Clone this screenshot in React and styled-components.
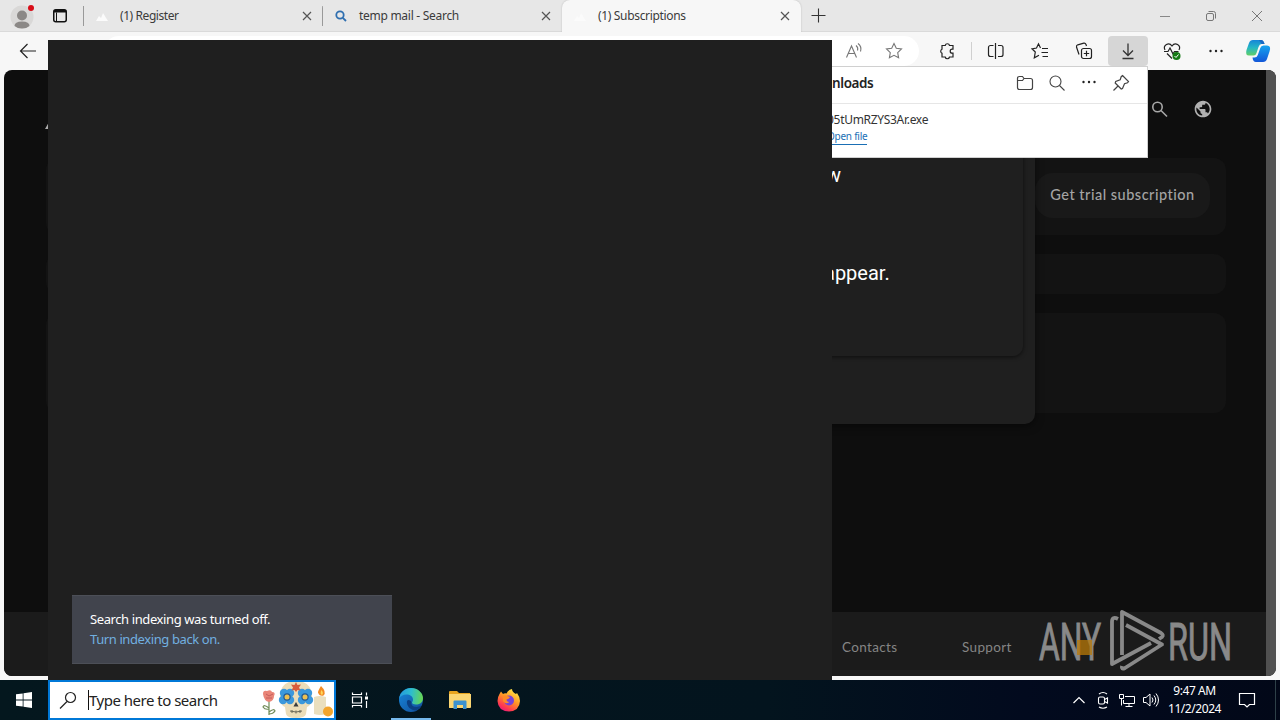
import React from 'react';
import styled, { createGlobalStyle } from 'styled-components';
import { MdPublic } from 'react-icons/md';

const App = () => {
  return (
    <Screen>
      <GlobalStyle />
      <Browser>
        <TabStrip>
          <Avatar><AvatarIcon /></Avatar>
          <TabActions><TabActionsIcon /></TabActions>
          <Tab $divided>
            <SiteIcon />
            <TabTitle $spacing="-0.42px">(1) Register</TabTitle>
            <CloseIcon />
          </Tab>
          <Tab>
            <LensIcon />
            <TabTitle $spacing="-0.28px">temp mail - Search</TabTitle>
            <CloseIcon />
          </Tab>
          <Tab $active>
            <SiteIcon />
            <TabTitle $spacing="-0.33px">(1) Subscriptions</TabTitle>
            <CloseIcon />
          </Tab>
          <NewTab><PlusIcon /></NewTab>
          <WindowControls>
            <Svg width="46" height="32" stroke="#888"><path d="M18 16.5h10" /></Svg>
            <Svg width="46" height="32" stroke="#777">
              <rect x="18.5" y="13.5" width="7" height="7" rx="1.5" />
              <path d="M20.5 11.5h5a2 2 0 0 1 2 2v5" />
            </Svg>
            <Svg width="46" height="32" stroke="#777"><path d="M18 11l10 10M28 11l-10 10" /></Svg>
          </WindowControls>
        </TabStrip>

        <Toolbar>
          <ToolButton>
            <Svg width="20" height="20" stroke="#222" strokeWidth="1.2"><path d="M18 10H2.5M9.5 3l-7 7 7 7" /></Svg>
          </ToolButton>
          <AddressBar>
            <ToolButton><ReadAloudIcon /></ToolButton>
            <ToolButton><StarIcon /></ToolButton>
          </AddressBar>
          <ToolButton><PuzzleIcon /></ToolButton>
          <Divider />
          <ToolButton><SplitIcon /></ToolButton>
          <ToolButton><FavouritesIcon /></ToolButton>
          <ToolButton><CollectionsIcon /></ToolButton>
          <ToolButton $pressed><DownloadIcon /></ToolButton>
          <ToolButton><HeartIcon /></ToolButton>
          <ToolButton><DotsIcon /></ToolButton>
          <Copilot><CopilotIcon /></Copilot>
        </Toolbar>

        <Page>
          <PageBody>
            <PageHeader>
              <PageLogo width="30" height="14"><path d="M0 13L4 6l4 4 7-8 14 11z" fill="#aaa" /></PageLogo>
              <Svg width="20" height="20" stroke="#a8a8a8" strokeWidth="1.6">
                <circle cx="8.5" cy="8" r="4.7" /><path d="M12 11.5l6 6" />
              </Svg>
              <MdPublic size={20} color="#b0b0b0" />
            </PageHeader>
            <Card $height="77px" $gap="19px"><TrialButton>Get trial subscription</TrialButton></Card>
            <Card $height="40px" $gap="19px" />
            <Card $height="100px" />
            <PageFooter>
              <FooterLink $width="120px">Contacts</FooterLink>
              <FooterLink>Support</FooterLink>
            </PageFooter>
          </PageBody>
          <ScrollTrack />
          <Dialog>
            <DialogPanel>
              <DialogTitle>w</DialogTitle>
              <DialogText>appear.</DialogText>
            </DialogPanel>
          </Dialog>
        </Page>
      </Browser>

      <Downloads>
        <DownloadsHeader>
          <DownloadsTitle>nloads</DownloadsTitle>
          <PopupIcon><FolderIcon /></PopupIcon>
          <PopupIcon>
            <Svg width="18" height="18" stroke="#444" strokeWidth="1.1"><circle cx="7.5" cy="7.5" r="5.5" /><path d="M11.5 11.5l5 5" /></Svg>
          </PopupIcon>
          <PopupIcon $lift="2px"><DotsIcon /></PopupIcon>
          <PopupIcon><PinIcon /></PopupIcon>
        </DownloadsHeader>
        <DownloadItem>
          <FileName>05tUmRZYS3Ar.exe</FileName>
          <OpenFile>Open file</OpenFile>
        </DownloadItem>
      </Downloads>

      <SearchFlyout>
        <Notice>
          <NoticeText>Search indexing was turned off.</NoticeText>
          <NoticeLink>Turn indexing back on.</NoticeLink>
        </Notice>
      </SearchFlyout>

      <Watermark><WatermarkArt /></Watermark>

      <Taskbar>
        <TaskSlot $width="48px"><WindowsIcon /></TaskSlot>
        <SearchBox>
          <Svg width="18" height="18" stroke="#222" strokeWidth="1.2"><circle cx="11.5" cy="6.5" r="5" /><path d="M8 10.5L1 17.5" /></Svg>
          <Caret />
          <SearchText>Type here to search</SearchText>
          <HolidayArt />
        </SearchBox>
        <TaskSlot $width="48px"><TaskViewIcon /></TaskSlot>
        <TaskSlot $width="54px"><TaskApp $running><EdgeIcon /></TaskApp></TaskSlot>
        <TaskSlot $width="44px"><ExplorerIcon /></TaskSlot>
        <TaskSlot $width="54px"><FirefoxIcon /></TaskSlot>
        <Tray>
          <TrayIcon><Svg width="14" height="8" stroke="#fff" strokeWidth="1.2"><path d="M1.5 7L7 1.5 12.5 7" /></Svg></TrayIcon>
          <TrayIcon>
            <Svg width="16" height="18" stroke="#fff" strokeWidth="1.1">
              <rect x="3.5" y="6" width="6" height="7" rx="1.5" /><path d="M9.5 8.5l3-1.5v5l-3-1.5M4 3q4-3 8 0M4 16q4 2.5 8 0" />
            </Svg>
          </TrayIcon>
          <TrayIcon>
            <Svg width="18" height="16" stroke="#fff">
              <path d="M7 4.5h9.5v7H5.5V8M11 11.5v3M7.5 14.5h7M1.5 2.5h4v4h-4zM3.5 6.5v7" />
            </Svg>
          </TrayIcon>
          <TrayIcon>
            <Svg width="18" height="16" stroke="#fff">
              <path d="M1.5 5.5h2.5l4-3.5v12l-4-3.5H1.5zM10 5.500q2 2.500 0 5M12 3.500q3.500 4.500 0 9M14 1.500q5 6.500 0 13" />
            </Svg>
          </TrayIcon>
          <Clock>
            <ClockLine>9:47 AM</ClockLine>
            <ClockLine>11/2/2024</ClockLine>
          </Clock>
          <TaskSlot $width="48px">
            <Svg width="18" height="18" stroke="#fff" strokeWidth="1.2"><path d="M1.5 2.5h15v11h-5l-2.500 2.500-2.500-2.500h-5z" /></Svg>
          </TaskSlot>
          <DesktopEdge />
        </Tray>
      </Taskbar>
    </Screen>
  )
}

const AvatarIcon = () => (
  <Svg width="28" height="28">
    <circle cx="14" cy="14" r="11.5" fill="#d9d8d7" />
    <circle cx="14" cy="12.500" r="5" fill="#8b8886" />
    <path d="M6.500 23q0-4.500 7.500-4.500t7.500 4.500q-3 2.500-7.500 2.500T6.500 23" fill="#8b8886" />
    <circle cx="23" cy="5" r="3" fill="#d80d18" />
  </Svg>
)

const TabActionsIcon = () => (
  <Svg width="16" height="16">
    <rect x="1.75" y="1.75" width="12.5" height="12" rx="2" stroke="#111" strokeWidth="1.5" />
    <path d="M2 2h12v2.5H2z" fill="#111" /><path d="M4.5 4.5v9" stroke="#111" />
  </Svg>
)

const SiteIcon = () => (
  <Svg width="14" height="14"><path d="M1 12l3-5 2 2 2-5 5 8z" fill="#fbfbfb" /></Svg>
)

const LensIcon = () => (
  <Svg width="14" height="14" stroke="#2f6fb0" strokeWidth="1.8"><circle cx="6" cy="6" r="3.7" /><path d="M8.8 8.8L12 12" /></Svg>
)

const CloseIcon = () => (
  <Svg width="10" height="10" stroke="#555" strokeWidth="1.2"><path d="M1 1l8 8M9 1L1 9" /></Svg>
)

const PlusIcon = () => (
  <Svg width="15" height="15" stroke="#333" strokeWidth="1.1"><path d="M.5 7.5h14M7.5.5v14" /></Svg>
)

const ReadAloudIcon = () => (
  <Svg width="20" height="18" stroke="#777" strokeWidth="1.1">
    <path d="M2.5 15.5l5-11.5 5 11.5M4.5 11.5h6.5M12 3.5q2.5 2 1.5 5M14 1.5q4 3 2.5 8" />
  </Svg>
)

const starPath = 'M9 1.5l2.3 4.8 5.2.7-3.8 3.6.9 5.2L9 13.3l-4.6 2.5.9-5.2L1.5 7l5.2-.7z'

const StarIcon = () => (
  <Svg width="18" height="18" stroke="#777" strokeWidth="1.1"><path d={starPath} /></Svg>
)

const PuzzleIcon = () => (
  <Svg width="18" height="18" stroke="#222" strokeWidth="1.2">
    <path d="M4 3.5h3.2a2.2 2.2 0 0 1 4.3 0h3.5v3.7h-.8a2 2 0 0 0 0 4h.8v3.8h-3.5a2.2 2.2 0 0 1-4.3 0H4v-3.8a2.2 2.2 0 0 1 0-4z" />
  </Svg>
)

const SplitIcon = () => (
  <Svg width="18" height="18" stroke="#222" strokeWidth="1.2">
    <path d="M6.5 3.5h-3a2 2 0 0 0-2 2v7a2 2 0 0 0 2 2h3M11 3.5h3a2 2 0 0 1 2 2v7a2 2 0 0 1-2 2h-3M8.5 1v16" />
  </Svg>
)

const FavouritesIcon = () => (
  <Svg width="18" height="18" stroke="#222" strokeWidth="1.2">
    <path d="M9.5 6L7.5 1.8 5.5 6l-4.5.8 3.3 3.2-1 5.8L8 13.3M11 6.5h6M10.5 10.5H17M11.5 14.5H17" />
  </Svg>
)

const CollectionsIcon = () => (
  <Svg width="18" height="18" stroke="#222" strokeWidth="1.2">
    <rect x="6.5" y="6.5" width="10" height="10" rx="2" />
    <path d="M11.5 8.8v5.4M8.8 11.5h5.4M4 12.5L1.5 5a2 2 0 0 1 1.3-2.2l6-1.6a2 2 0 0 1 2.200 1.200L11.5 4" />
  </Svg>
)

const DownloadIcon = () => (
  <Svg width="16" height="18" stroke="#333" strokeWidth="1.3"><path d="M8 1.5v12M3 8.5l5 5 5-5M2.5 16.5h11" /></Svg>
)

const HeartIcon = () => (
  <Svg width="18" height="18" stroke="#222" strokeWidth="1.2">
    <path d="M2 8C-.5 3 6-.5 9 4c3-4.5 9.5-1 7 4M1 9.5h4L7 6l3 6 1.5-2.5h4M4 11.5l5 5" />
    <circle cx="13.5" cy="14" r="4" fill="#157a15" stroke="none" />
    <path d="M11.5 14l1.500 1.500 2.500-3" stroke="#fff" strokeWidth="1" />
  </Svg>
)

const DotsIcon = () => (
  <Svg width="16" height="16" fill="#222"><circle cx="2.5" cy="8" r="1.2" /><circle cx="8" cy="8" r="1.2" /><circle cx="13.5" cy="8" r="1.2" /></Svg>
)

const CopilotIcon = () => (
  <Svg width="26" height="24">
    <defs>
      <linearGradient id="cpLeft" x1="0" y1="0" x2="0" y2="1"><stop offset="0" stopColor="#1685d8" /><stop offset=".5" stopColor="#25b7c4" /><stop offset="1" stopColor="#61cf66" /></linearGradient>
      <linearGradient id="cpRight" x1="0" y1="0" x2="0" y2="1"><stop offset="0" stopColor="#15a4ef" /><stop offset="1" stopColor="#1357d8" /></linearGradient>
    </defs>
    <path d="M8 1h8q2.5 0 3.5 4h-3q-2 0-3 3l-2 6q-.7 2.500-3 2.500H4Q0 16.500 1.500 11L4 4q1-3 4-3z" fill="url(#cpLeft)" />
    <path d="M18.500 6.500H22q4.500 0 2.500 6L22 20q-1 3-4 3h-7q-3 0-3.500-4.500h2q2.500 0 3.300-2.500l2.500-7q.7-2.500 3.200-2.500z" fill="url(#cpRight)" />
    <path d="M14 1h2q2.500 0 3.500 4h-3z" fill="#1769c5" />
  </Svg>
)

const FolderIcon = () => (
  <Svg width="18" height="18" stroke="#444" strokeWidth="1.2">
    <path d="M1.5 4.5q0-2 2-2h3l1.5 2h6.5q2 0 2 2v7q0 2-2 2h-11q-2 0-2-2zM1.5 6.500h5l1.500-2" />
  </Svg>
)

const PinIcon = () => (
  <Svg width="18" height="18" stroke="#444" strokeWidth="1.2">
    <path d="M10.5 1.5l6 6-1 1.3-3 1-2 4.7-1.3.5-6-6 .5-1.5 4.5-1.8 1-3zM6 12l-4.500 4.500" />
  </Svg>
)

const WatermarkArt = () => (
  <Svg width="200" height="66">
    <g fill="#898989" stroke="#898989" strokeWidth="1" fontFamily="Roboto, sans-serif" fontSize="52" fontWeight="400">
      <text x="1" y="51.5" textLength="62" lengthAdjust="spacingAndGlyphs">ANY</text>
      <text x="130" y="51.5" textLength="64" lengthAdjust="spacingAndGlyphs">RUN</text>
    </g>
    <rect x="39" y="32" width="15" height="15" fill="#b97908" opacity=".75" />
    <g stroke="#898989" strokeWidth="3.8" strokeLinejoin="round">
      <path d="M80 11q-6-3-6 3v42l39-21" />
      <path d="M121 31l3-2q2-2-1-4L84 4v43" />
      <path d="M88 17l36 19.500L87 60q-4 2-3-2" />
    </g>
  </Svg>
)

const WindowsIcon = () => (
  <Svg width="16" height="16" fill="#fff"><path d="M0 2.3L6.7 1.4v6.2H0zM7.5 1.3L16 0v7.6H7.5zM0 8.4h6.7v6.2L0 13.7zM7.5 8.4H16V16l-8.5-1.3z" /></Svg>
)

const TaskViewIcon = () => (
  <Svg width="18" height="16" stroke="#fff" strokeWidth="1.2">
    <path d="M1.5.5v2h9v-2M1.5 15.5v-2h9v2M1.5 5h9v6h-9zM15.5.5v3M15.5 9v7" />
    <path d="M14 4.5h3v3h-3z" fill="#fff" stroke="none" />
  </Svg>
)

const EdgeIcon = () => (
  <Svg width="26" height="26">
    <defs>
      <linearGradient id="edTop" x1="0" y1=".3" x2="1" y2=".4"><stop offset="0" stopColor="#2498de" /><stop offset=".5" stopColor="#2dbdcf" /><stop offset="1" stopColor="#67d653" /></linearGradient>
      <linearGradient id="edLow" x1="0" y1="0" x2="1" y2="1"><stop offset="0" stopColor="#1788dc" /><stop offset="1" stopColor="#124d99" /></linearGradient>
    </defs>
    <circle cx="13" cy="13" r="12" fill="url(#edLow)" />
    <path d="M1 12C2 5 7 1 13 1c7 0 12 5 12 10 0 5-4 6.500-7 6.500-2.500 0-4-1-4-2 0-.7 1-1 1-3C15 9.500 12 7.500 8.500 7.500 5 7.500 2 9 1 12z" fill="url(#edTop)" />
    <path d="M9 14c-1 5 4 9.500 9 9.500 2.500-1 4.500-3 5.500-5-4 2.500-11 2-10-3.500-1-2-3.500-3-4.500-1z" fill="#0b3f83" />
  </Svg>
)

const ExplorerIcon = () => (
  <Svg width="22" height="20">
    <path d="M0 2q0-1 1-1h7l2 2h11v15H0z" fill="#e8a51f" />
    <path d="M0 4h22V17q0 1-1 1H1q-1 0-1-1z" fill="#fbd672" />
    <path d="M4.500 19v-7.500q0-1 1-1h11q1 0 1 1V19H14v-4H8v4z" fill="#3c92cf" />
  </Svg>
)

const FirefoxIcon = () => (
  <Svg width="24" height="24">
    <defs>
      <linearGradient id="ffBody" x1=".8" y1="0" x2=".2" y2="1"><stop offset="0" stopColor="#fff04a" /><stop offset=".45" stopColor="#ff9525" /><stop offset=".8" stopColor="#ff3750" /><stop offset="1" stopColor="#e31587" /></linearGradient>
    </defs>
    <path d="M2.5 6L4 3.5 6 6q1.5-1 3.5-.5Q11 2 15 1q0 3 4 5l1-1q3 4 3 8-.5 10-11 10.5Q1 23 .5 13q0-4 2-7z" fill="url(#ffBody)" />
    <circle cx="12" cy="12.500" r="5" fill="#7543d8" />
    <path d="M6 8q3-1.500 7 1-1 2-3.500 2.500 0 2 3 2.500-4 3-6.500-1z" fill="#ff8b25" />
  </Svg>
)

const HolidayArt = () => (
  <Svg width="74" height="38">
    <path d="M9 18v16M9 27q-5-4-6-1 2 3 6 2M9 31q5-4 6-1-2 3-6 3" stroke="#718b58" strokeWidth="1.2" />
    <path d="M3 13q0-4 4-3 4-2 5 1 4 0 2 4 0 5-5 6-5-1-6-8z" fill="#e98578" />
    <path d="M6 13l3 2 4-2M6 17h6" stroke="#c45e5b" />
    <path d="M20 16Q20 0 36 0t16 16q0 8-5 10l-1 7q-1 4-10 4t-10-4l-1-7q-5-2-5-10z" fill="#ebddb9" />
    <g fill="#3b98dc">
      <circle cx="24" cy="12" r="4.2" /><circle cx="30" cy="12" r="4.2" /><circle cx="23" cy="19" r="4.2" /><circle cx="30" cy="19" r="4.2" />
      <circle cx="42" cy="12" r="4.2" /><circle cx="48" cy="12" r="4.2" /><circle cx="42" cy="19" r="4.2" /><circle cx="49" cy="19" r="4.2" />
    </g>
    <circle cx="27" cy="16" r="3.7" fill="#255a91" /><circle cx="45" cy="16" r="3.7" fill="#255a91" />
    <circle cx="27" cy="16" r="2.5" fill="#edc052" /><circle cx="45" cy="16" r="2.5" fill="#edc052" />
    <path d="M36 1l1.500 3 3.500-.5-2 3 1.500 3-3-.5L36 11l-1.500-2-3 .5 1.500-3-2-3 3.500.5z" fill="#d85c3d" />
    <path d="M36 21l2.500 4.500h-5z" fill="#383b3c" />
    <path d="M30 30q6 2 12 0M32 29v3M36 29.5v3M40 29v3" stroke="#6b6856" />
    <path d="M54 16q6-2 12 0v17q-6 2-12 0z" fill="#eadfbe" />
    <path d="M61 5q6 6 2.500 9.500-4 1-5.500-3 0-2 3-6.500z" fill="#f38b23" />
    <path d="M61.500 9q2.500 3 .5 5-2.500-1-.5-5z" fill="#ffd85a" />
    <circle cx="68" cy="30.500" r="5" fill="#f3a52c" />
  </Svg>
)

const GlobalStyle = createGlobalStyle`
    body{
        margin:0;
        overflow:hidden;
        font-family:"Noto Sans", "Open Sans", sans-serif;
    }
    *{
        box-sizing:border-box;
    }
`
const Svg = styled.svg.attrs((p) => ({ fill: p.fill || 'none' }))`
    display:block;
    flex:none;
    overflow:visible;
`
const Screen = styled.div`
    position:relative;
    width:1280px;
    height:720px;
    display:flex;
    flex-direction:column;
    overflow:hidden;
`
const Browser = styled.div`
    height:680px;
    display:flex;
    flex-direction:column;
    background:#f7f7f7;
`
const TabStrip = styled.div`
    height:32px;
    display:flex;
    background:#e7e7e7;
    border-bottom:1px solid #dadada;
`
const Avatar = styled.div`
    width:44px;
    padding:3px 8px 0;
`
const TabActions = styled.div`
    width:40px;
    padding:8px 0 0 8px;
    background:linear-gradient(#999, #999) right 6px / 1px 20px no-repeat;
`
const Tab = styled.div`
    width:239px;
    height:32px;
    display:flex;
    align-items:center;
    padding:0 11px 0 11px;
    border-radius:8px 8px 0 0;
    background:${(p) => {
        if (p.$active) return '#f7f7f7'
        return p.$divided ? 'linear-gradient(#999, #999) right 6px / 1px 20px no-repeat' : 'transparent'
    }};
    box-shadow:${(p) => (p.$active ? '0 0 2px rgba(0,0,0,0.2)' : 'none')};
    clip-path:inset(0 -3px 0 -3px);
`
const TabTitle = styled.span`
    flex:1;
    margin-left:11px;
    padding-bottom:1px;
    color:#3b3b3b;
    font-size:12px;
    letter-spacing:${(p) => p.$spacing};
    white-space:nowrap;
`
const NewTab = styled.div`
    display:flex;
    align-items:center;
    margin-left:10px;
`
const WindowControls = styled.div`
    display:flex;
    margin-left:auto;
`
const Toolbar = styled.div`
    height:38px;
    display:flex;
    gap:4px;
    padding:4px 4px 4px 8px;
`
const ToolButton = styled.div`
    width:40px;
    height:30px;
    display:flex;
    align-items:center;
    justify-content:center;
    border-radius:4px;
    background:${(p) => (p.$pressed ? '#d6d6d6' : 'transparent')};
`
const AddressBar = styled.div`
    flex:1;
    display:flex;
    justify-content:flex-end;
    margin:0 4px 0 52px;
    padding-right:5px;
    border-radius:15px;
    background:#fff;
`
const Divider = styled.div`
    width:1px;
    height:18px;
    margin:6px 0;
    background:#d0d0d0;
`
const Copilot = styled.div`
    width:36px;
    display:flex;
    align-items:center;
    justify-content:center;
`
const Page = styled.div`
    position:relative;
    height:606px;
    display:flex;
    margin:0 4px;
    border-radius:8px;
    overflow:hidden;
    background:#0e0e0e;
`
const PageBody = styled.div`
    flex:1;
    display:flex;
    flex-direction:column;
`
const PageHeader = styled.div`
    height:88px;
    display:flex;
    align-items:center;
    padding:0 53px 11px 41px;
    & > svg + svg + svg{
        margin-left:24px;
    }
`
const PageLogo = styled.svg`
    margin:28px auto 0 0;
`
const Card = styled.div`
    width:1180px;
    height:${(p) => p.$height};
    margin:0 0 ${(p) => p.$gap || 0} 42px;
    padding:15px 16px;
    display:flex;
    justify-content:flex-end;
    border-radius:12px;
    background:#131313;
`
const TrialButton = styled.div`
    width:175px;
    height:45px;
    border-radius:18px;
    background:#191919;
    color:#a4a4a4;
    font-family:Lato, sans-serif;
    font-weight:500;
    font-size:14.5px;
    letter-spacing:0.5px;
    line-height:44px;
    text-align:center;
    white-space:nowrap;
`
const PageFooter = styled.div`
    height:64px;
    display:flex;
    margin-top:auto;
    padding:0 0 0 838px;
    background:#1b1b1b;
`
const FooterLink = styled.span`
    width:${(p) => p.$width};
    color:#858585;
    font-family:Lato, sans-serif;
    font-size:13.5px;
    letter-spacing:0.35px;
    line-height:71px;
`
const ScrollTrack = styled.div`
    width:10px;
    background:#505050;
`
const Dialog = styled.div`
    position:absolute;
    left:231px;
    top:40px;
    width:800px;
    height:314px;
    padding:12px;
    border-radius:10px;
    background:#1f1f1f;
    box-shadow:0 2px 8px rgba(0,0,0,0.5);
`
const DialogPanel = styled.div`
    height:234px;
    padding:41px 0 0 577px;
    border-radius:10px;
    box-shadow:0 1px 4px rgba(0,0,0,0.6);
    color:#fff;
    font-family:Roboto, sans-serif;
    font-size:20px;
`
const DialogTitle = styled.div`
    height:98px;
    padding-left:2px;
    line-height:24px;
`
const DialogText = styled.div`
    line-height:24px;
`
const Downloads = styled.div`
    position:absolute;
    left:790px;
    top:66px;
    width:358px;
    height:92px;
    background:#fff;
    border:1px solid #d0d0d0;
`
const DownloadsHeader = styled.div`
    height:37px;
    display:flex;
    align-items:flex-start;
    padding:0 10px 0 41px;
    border-bottom:1px solid #e6e6e6;
`
const DownloadsTitle = styled.div`
    flex:1;
    color:#222;
    font-size:13.5px;
    font-weight:600;
    letter-spacing:-0.4px;
    line-height:33px;
`
const PopupIcon = styled.div`
    width:32px;
    height:32px;
    display:flex;
    align-items:center;
    justify-content:center;
    padding-bottom:${(p) => p.$lift || 0};
`
const DownloadItem = styled.div`
    display:flex;
    flex-direction:column;
    align-items:flex-start;
    padding:7px 0 0 36px;
`
const FileName = styled.div`
    color:#333;
    font-size:12px;
    letter-spacing:-0.3px;
    line-height:18px;
`
const OpenFile = styled.div`
    color:#1a6fb5;
    font-size:10px;
    letter-spacing:-0.25px;
    line-height:15px;
    border-bottom:1px solid #1a6fb5;
`
const SearchFlyout = styled.div`
    position:absolute;
    left:48px;
    top:40px;
    width:784px;
    height:640px;
    display:flex;
    align-items:flex-end;
    padding:0 24px 16px;
    background:#1f1f1f;
`
const Notice = styled.div`
    width:320px;
    height:69px;
    padding:13px 18px;
    background:#41444d;
    border:solid #4c4f57;
    border-width:1px 0;
    font-size:13px;
    letter-spacing:-0.4px;
    line-height:20px;
`
const NoticeText = styled.div`
    color:#fff;
`
const NoticeLink = styled.div`
    color:#71b0e0;
`
const Watermark = styled.div`
    position:absolute;
    left:1038px;
    top:608px;
`
const Taskbar = styled.div`
    height:40px;
    display:flex;
    background:linear-gradient(90deg, #04171e, #03141e 60%, #020a1e 80%, #020818);
`
const TaskSlot = styled.div`
    width:${(p) => p.$width};
    display:flex;
    align-items:center;
    justify-content:center;
`
const SearchBox = styled.div`
    width:288px;
    display:flex;
    align-items:center;
    padding-left:9px;
    background:#fff;
    border:2px solid #0078d7;
    overflow:hidden;
`
const Caret = styled.div`
    width:1px;
    height:20px;
    margin-left:11px;
    background:#111;
`
const SearchText = styled.div`
    flex:1;
    color:#222;
    font-size:15px;
    letter-spacing:-0.5px;
    white-space:nowrap;
`
const TaskApp = styled.div`
    width:40px;
    height:40px;
    display:flex;
    align-items:center;
    justify-content:center;
    box-shadow:${(p) => (p.$running ? 'inset 0 -2px #76b9ed' : 'none')};
`
const Tray = styled.div`
    display:flex;
    margin-left:auto;
`
const TrayIcon = styled.div`
    width:24px;
    display:flex;
    align-items:center;
    justify-content:center;
`
const Clock = styled.div`
    width:60px;
    padding:2px 0 0 3px;
    color:#fff;
    font-size:12px;
    letter-spacing:-0.45px;
    text-align:center;
`
const ClockLine = styled.div`
    line-height:18px;
    white-space:nowrap;
`
const DesktopEdge = styled.div`
    width:9px;
    background:linear-gradient(#2e4048, #2e4048) 4px 0 / 1px 40px no-repeat;
`

export default App
